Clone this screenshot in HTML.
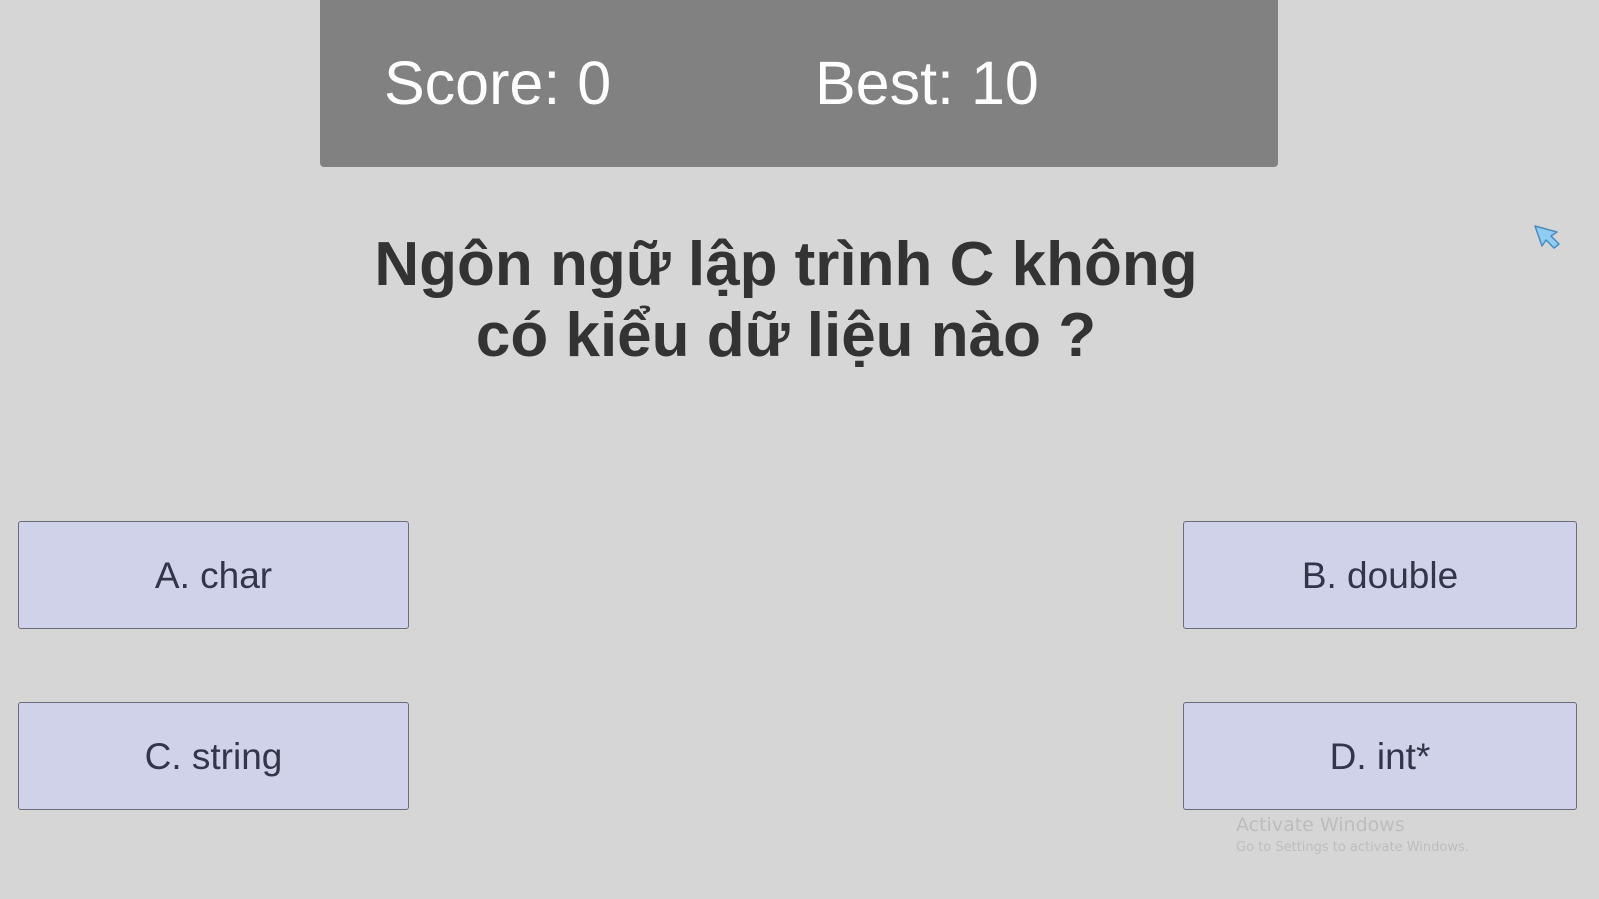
<!DOCTYPE html>
<html><head><meta charset="utf-8"><style>
html,body{margin:0;width:1599px;height:899px;overflow:hidden;background:#d6d6d6;font-family:"Liberation Sans",sans-serif;position:relative}
.panel{position:absolute;left:320px;top:0;width:958px;height:167px;background:#818181;border-radius:0 0 4px 4px}
.s{position:absolute;color:#fff;font-size:61px;top:48px;line-height:70px}
.q{position:absolute;left:186px;width:1200px;top:229px;text-align:center;font-weight:bold;font-size:62px;line-height:71px;color:#333}
.b{position:absolute;box-sizing:border-box;background:#d0d2ea;border:1.5px solid #6a6c78;border-radius:3px;display:flex;align-items:center;justify-content:center;font-size:37px;color:#33354a;padding-top:2px}
.w{position:absolute;left:1236px;color:#bdbdbd;font-family:"DejaVu Sans",sans-serif}
</style></head><body>
<div class="panel">
<div class="s" style="left:64px">Score: 0</div>
<div class="s" style="left:495px">Best: 10</div>
</div>
<div class="q">Ngôn ngữ lập trình C không<br>có kiểu dữ liệu nào ?</div>
<div class="b" style="left:18px;top:521px;width:391px;height:108px">A. char</div>
<div class="b" style="left:1183px;top:521px;width:394px;height:108px">B. double</div>
<div class="b" style="left:18px;top:702px;width:391px;height:108px">C. string</div>
<div class="b" style="left:1183px;top:702px;width:394px;height:108px">D. int*</div>
<div class="w" style="top:814px;font-size:19px">Activate Windows</div>
<div class="w" style="top:840px;font-size:13px">Go to Settings to activate Windows.</div>
<svg style="position:absolute;left:1533px;top:224px" width="28" height="26" viewBox="0 0 28 26">
<path d="M2 2 L24 8 L18 12 L26 20 L21 24 L13 16 L9 22 Z" fill="#8fcdf2" stroke="#4a8cc0" stroke-width="1.5" stroke-linejoin="round"/>
</svg>
</body></html>
